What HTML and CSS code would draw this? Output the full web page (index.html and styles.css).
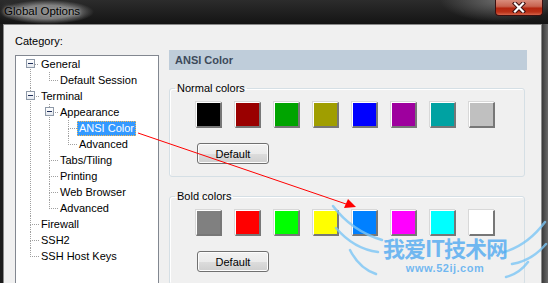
FILE: index.html
```html
<!DOCTYPE html>
<html lang="en">
<head>
  <meta charset="UTF-8" />
  <title>Global Options</title>
  <link rel="stylesheet" href="styles.css">
</head>
<body>
  <div class="window">
    <div class="titlebar">
      <div class="title">Global Options</div>
      <div class="close">
        <svg width="14" height="11" viewBox="0 0 14 11">
          <path d="M3 1.5 L11 9.5 M11 1.5 L3 9.5" stroke="#3a1010" stroke-width="4.2" stroke-linecap="square" />
          <path d="M3 1.5 L11 9.5 M11 1.5 L3 9.5" stroke="#fff" stroke-width="2.2" stroke-linecap="square" />
        </svg>
      </div>
    </div>

    <div class="client">
      <div class="left">
        <div class="caption">Category:</div>
        <ul class="tree">
          <li>
            <div class="row"><span class="toggle"></span><span class="label">General</span></div>
            <ul>
              <li><div class="row"><span class="label">Default Session</span></div></li>
            </ul>
          </li>
          <li>
            <div class="row"><span class="toggle"></span><span class="label">Terminal</span></div>
            <ul>
              <li>
                <div class="row"><span class="toggle"></span><span class="label">Appearance</span></div>
                <ul>
                  <li><div class="row"><span class="label selected">ANSI Color</span></div></li>
                  <li><div class="row"><span class="label">Advanced</span></div></li>
                </ul>
              </li>
              <li><div class="row"><span class="label">Tabs/Tiling</span></div></li>
              <li><div class="row"><span class="label">Printing</span></div></li>
              <li><div class="row"><span class="label">Web Browser</span></div></li>
              <li><div class="row"><span class="label">Advanced</span></div></li>
            </ul>
          </li>
          <li><div class="row"><span class="label">Firewall</span></div></li>
          <li><div class="row"><span class="label">SSH2</span></div></li>
          <li><div class="row"><span class="label">SSH Host Keys</span></div></li>
        </ul>
      </div>

      <div class="right">
        <div class="band">ANSI Color</div>

        <fieldset class="group">
          <legend>Normal colors</legend>
          <div class="swatches">
            <span class="swatch" style="background:#000000"></span>
            <span class="swatch" style="background:#9a0000"></span>
            <span class="swatch" style="background:#00a400"></span>
            <span class="swatch" style="background:#a09e00"></span>
            <span class="swatch" style="background:#0000ff"></span>
            <span class="swatch" style="background:#9e009e"></span>
            <span class="swatch" style="background:#00a2a2"></span>
            <span class="swatch" style="background:#c0c0c0"></span>
          </div>
          <button class="btn">Default</button>
        </fieldset>

        <fieldset class="group">
          <legend>Bold colors</legend>
          <div class="swatches">
            <span class="swatch" style="background:#808080"></span>
            <span class="swatch" style="background:#ff0000"></span>
            <span class="swatch" style="background:#00ff00"></span>
            <span class="swatch" style="background:#ffff00"></span>
            <span class="swatch" style="background:#0080ff"></span>
            <span class="swatch" style="background:#ff00ff"></span>
            <span class="swatch" style="background:#00ffff"></span>
            <span class="swatch" style="background:#ffffff"></span>
          </div>
          <button class="btn">Default</button>
        </fieldset>
      </div>
    </div>
  </div>

  <!-- annotation arrow and watermark drawn over the screenshot -->
  <svg class="overlay" width="548" height="283" viewBox="0 0 548 283">
    <g fill="none" stroke="#7cc6f6" stroke-width="2.5" stroke-linecap="round" opacity="0.8">
      <path d="M333 206 C345 222 362 234 382 240" />
      <path d="M336 228 C348 242 362 250 378 252" />
      <path d="M350 250 C356 262 364 270 376 274" />
      <path d="M545 222 C533 238 518 248 504 252" />
      <path d="M546 244 C536 256 524 262 512 264" />
      <path d="M528 262 C522 270 514 275 506 277" />
    </g>
    <line x1="138" y1="133" x2="349" y2="205" stroke="#ff0000" stroke-width="1" />
    <polygon points="356,207 344,208 348,199" fill="#ff0000" />
  </svg>
  <div class="watermark">
    <div class="wm-title">我爱IT技术网</div>
    <div class="wm-url">www.52ij.com</div>
  </div>
</body>
</html>
```

FILE: styles.css
```css
body {
  margin: 0;
  width: 548px;
  height: 283px;
  overflow: hidden;
  background: linear-gradient(90deg, #1c1c1c 0%, #111 98%, #6a6a6a 100%);
  font-family: "Liberation Sans", Arial, sans-serif;
  font-size: 11px;
  color: #000;
  position: relative;
}

.titlebar {
  height: 24px;
  display: flex;
  justify-content: space-between;
  align-items: flex-start;
  background:
    radial-gradient(ellipse 60px 22px at 500px 0, #6a6a6a, rgba(80, 80, 80, 0) 100%),
    linear-gradient(#2c2c2c, #141414);
}

.title {
  padding: 3px 14px 5px 4px;
  font-size: 11.5px;
  line-height: 16px;
  color: #000;
  background: radial-gradient(closest-side, rgba(190, 190, 190, 0.6) 55%, rgba(190, 190, 190, 0));
  text-shadow: 0 0 3px #bbb, 0 0 7px #999;
}

.close {
  width: 48px;
  height: 16px;
  margin-right: 5px;
  box-sizing: border-box;
  border: 1px solid #3b1010;
  border-top: 0;
  border-radius: 0 0 4px 4px;
  background: linear-gradient(#d98d7c, #c86450 42%, #b4260f 55%, #bb3118 80%, #d5644a);
  display: flex;
  justify-content: center;
  align-items: center;
}

.client {
  margin-left: 3px;
  width: 539px;
  height: 259px;
  box-sizing: border-box;
  border: 1px solid #8a8a8a;
  border-bottom: 0;
  background: #f0f0f0;
  display: flex;
  padding-left: 11px;
}

.left {
  padding-top: 8px;
}

.caption {
  line-height: 16px;
}

.tree,
.tree ul {
  list-style: none;
  margin: 0;
  padding: 0;
}

.tree {
  margin-top: 6px;
  width: 144px;
  height: 240px;
  box-sizing: border-box;
  background: #fff;
  border: 1px solid #828790;
}

.tree ul {
  padding-left: 19px;
}

.tree li {
  position: relative;
}

.tree li::before {
  content: "";
  position: absolute;
  left: 14px;
  top: 0;
  width: 8px;
  height: 8px;
  border-left: 1px dotted #a0a0a0;
  border-bottom: 1px dotted #a0a0a0;
}

.tree > li:first-child::before {
  top: 8px;
  height: 0;
  border-left: 0;
}

.tree li:not(:last-child)::after {
  content: "";
  position: absolute;
  left: 14px;
  top: 8px;
  bottom: 0;
  border-left: 1px dotted #a0a0a0;
}

.row {
  height: 16px;
  padding-left: 23px;
  display: flex;
  align-items: center;
}

.toggle {
  position: absolute;
  z-index: 1;
  left: 10px;
  top: 3px;
  width: 9px;
  height: 9px;
  box-sizing: border-box;
  border: 1px solid #8e99a8;
  background: linear-gradient(#fff, #e4e8ee);
}

.toggle::after {
  content: "";
  position: absolute;
  left: 1px;
  top: 3px;
  width: 5px;
  height: 1px;
  background: #1f2f5a;
}

.label {
  height: 15px;
  line-height: 15px;
  padding: 0 2px;
  white-space: nowrap;
}

.label.selected {
  background: #3399ff;
  color: #fff;
  outline: 1px dotted #f5b851;
  outline-offset: -1px;
}

.right {
  margin-left: 10px;
  padding-top: 25px;
  width: 358px;
}

.band {
  height: 20px;
  line-height: 20px;
  padding-left: 6px;
  background: #bfcdda;
  color: #3d4a5a;
  font-weight: bold;
}

.group {
  margin: 11px 2px 0 0;
  padding: 0 0 12px 0;
  border: 1px solid #d5dfe5;
  border-radius: 3px;
  box-shadow: inset 1px 1px 0 #fff;
}

.group + .group {
  margin-top: 12px;
}

.group legend {
  margin-left: 5px;
  padding: 0 2px;
  line-height: 15px;
  color: #000;
}

.swatches {
  display: flex;
  gap: 13px;
  margin-top: 6px;
  padding-left: 26px;
}

.swatch {
  width: 26px;
  height: 26px;
  box-sizing: border-box;
  border-top: 1px solid #fff;
  border-left: 1px solid #fff;
  border-right: 2px solid #777;
  border-bottom: 2px solid #777;
  box-shadow: -1px -1px 0 #d8d8d8;
}

.btn {
  display: block;
  margin: 15px 0 0 27px;
  width: 72px;
  height: 21px;
  padding: 0;
  border: 1px solid #707070;
  border-radius: 3px;
  background: linear-gradient(#f2f2f2, #ebebeb 50%, #dddddd 51%, #cfcfcf);
  box-shadow: inset 0 0 0 1px #fcfcfc;
  font-family: "Liberation Sans", Arial, sans-serif;
  font-size: 11px;
  color: #000;
}

.overlay {
  position: absolute;
  left: 0;
  top: 0;
  pointer-events: none;
}

.watermark {
  position: absolute;
  left: 378px;
  top: 233px;
  width: 134px;
  text-align: center;
  color: rgba(70, 165, 240, 0.75);
  pointer-events: none;
}

.wm-title {
  font-family: "Noto Sans CJK SC", sans-serif;
  font-weight: bold;
  font-size: 22px;
  line-height: 29px;
  letter-spacing: -1px;
}

.wm-url {
  font-family: "Liberation Sans", Arial, sans-serif;
  font-weight: bold;
  font-size: 11px;
  line-height: 12px;
  letter-spacing: 0.5px;
}
```
